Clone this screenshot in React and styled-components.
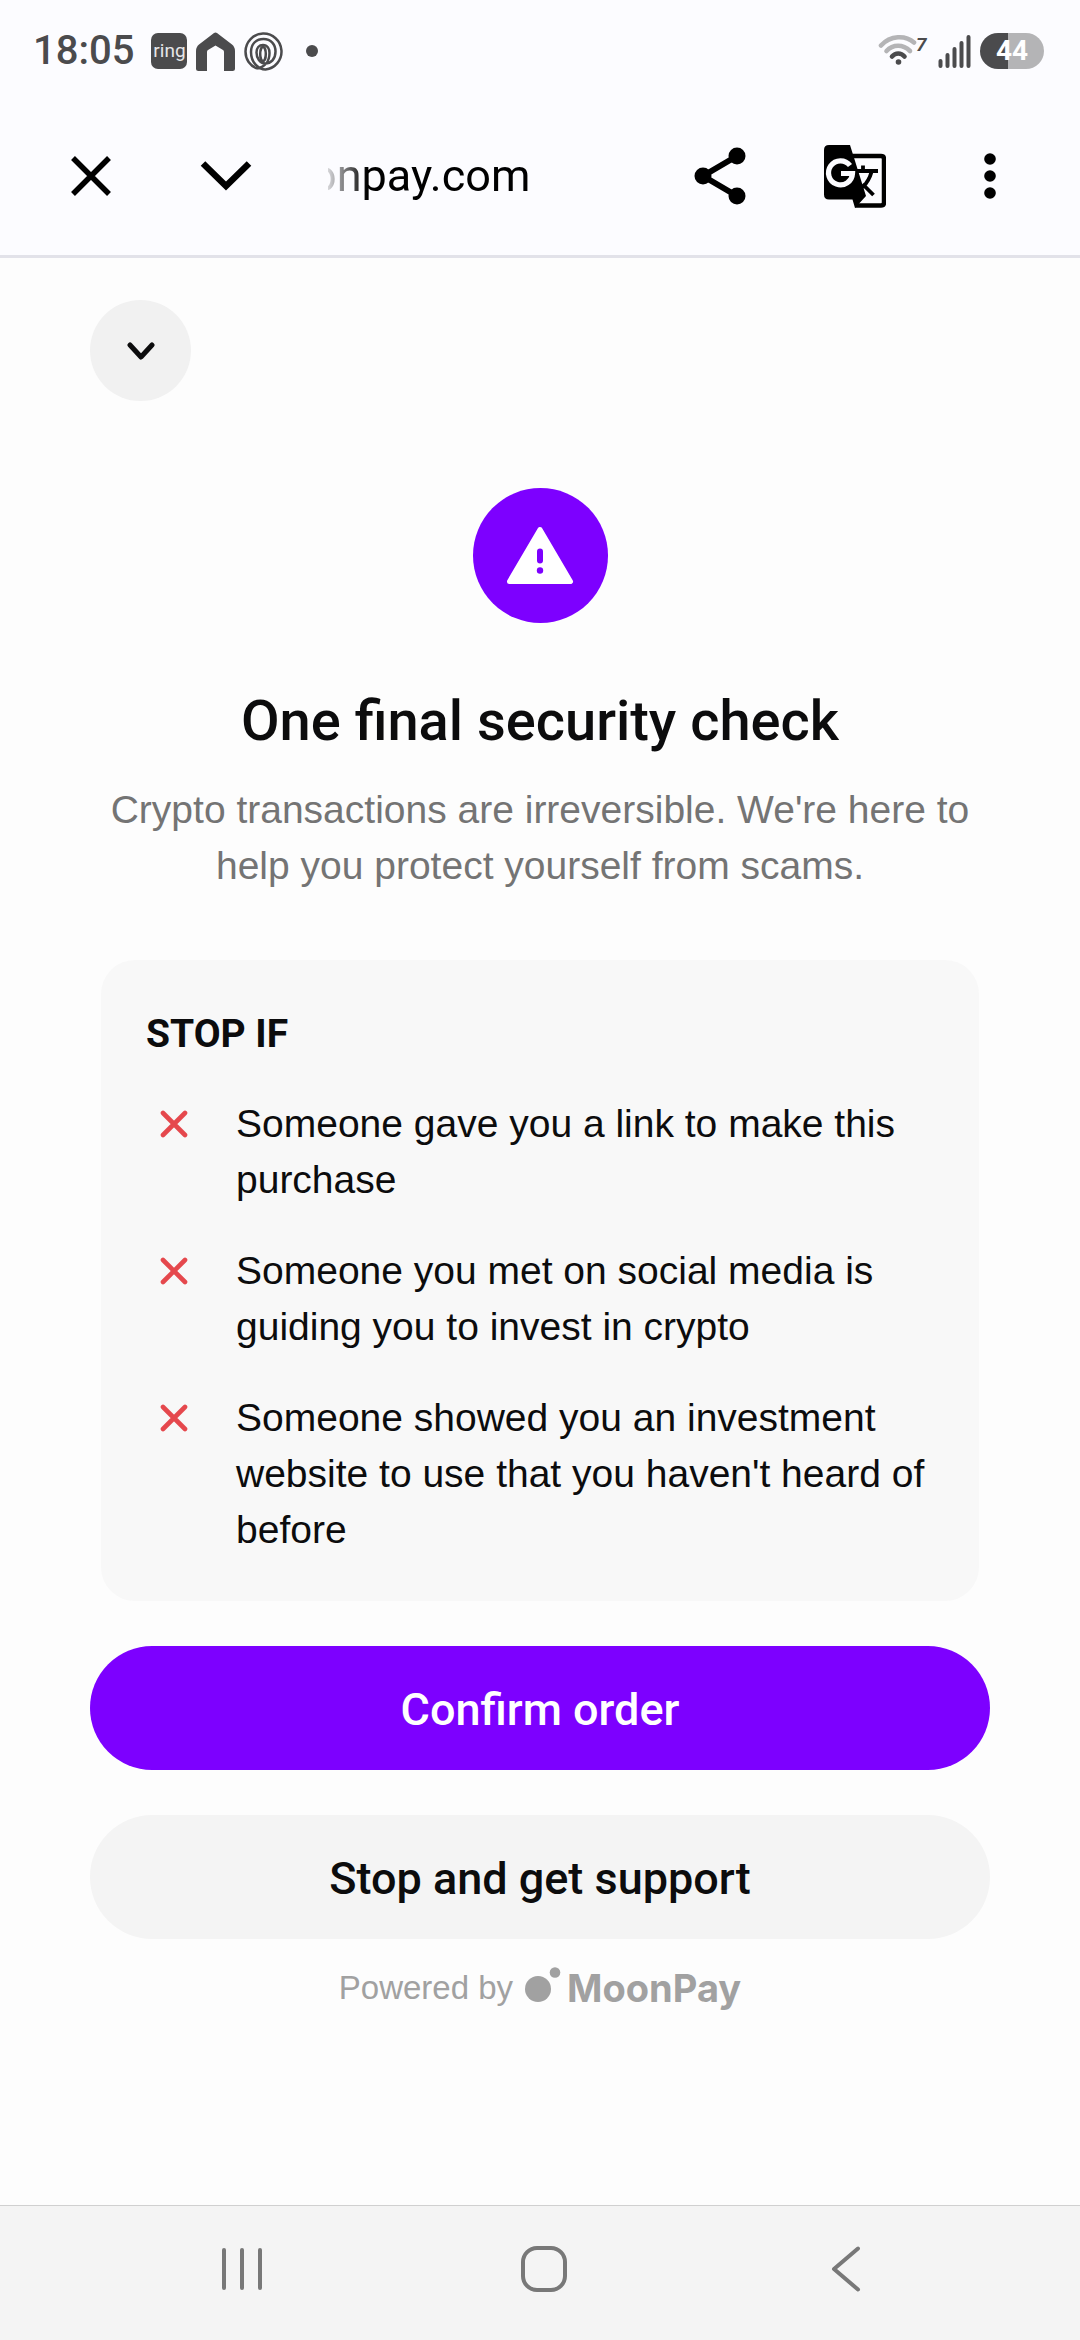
import React from "react";
import styled, { createGlobalStyle } from "styled-components";

const stopReasons = [
  "Someone gave you a link to make this purchase",
  "Someone you met on social media is guiding you to invest in crypto",
  "Someone showed you an investment website to use that you haven't heard of before",
];

const HouseIcon = () => (
  <svg width="39" height="39" viewBox="0 0 39 39" fill="#4b4b4d" aria-hidden="true">
    <path d="M18 1Q19.500 0 21 1L36 12.500Q39 15 39 19V36.500Q39 39 36.500 39H28V20Q28 18.500 27 18L19.500 13.500 12 18Q11 18.500 11 20V39H2.500Q0 39 0 36.500V19Q0 15 3 12.500Z" />
  </svg>
);

const SwirlIcon = () => (
  <svg
    width="39"
    height="39"
    viewBox="0 0 39 39"
    fill="none"
    stroke="#4b4b4d"
    strokeWidth="2.500"
    aria-hidden="true"
  >
    <path d="M13 36.500C6 34 1.500 27.500 1.500 19.500a18 18 0 1 1 20 18C15 37.500 7 31 7 20 7 12 12 7 19.500 7 27 7 31.500 12.500 31.500 19.500 31.500 27 27 31.500 21 31.500 16 31.500 12.500 26 12.500 20.500 12.500 16 15 13 19 13 23.500 13 25.500 17 25.500 21 25.500 29 21 35 13 36.500" />
    <ellipse cx="19" cy="22" rx="2.800" ry="7" />
  </svg>
);

const WifiIcon = () => (
  <svg width="51" height="34" viewBox="0 0 51 34" fill="none" aria-hidden="true">
    <g strokeWidth="4.600" strokeLinecap="round">
      <path d="M3 11.500C12.500 1 27.500 1 36 8.500" stroke="#b4b4b6" />
      <path d="M8.500 17C15 10 25 10 32 17" stroke="#b4b4b6" />
      <path d="M14 22.500C17.500 18.500 23 18.500 26.500 22.500" stroke="#4b4b4d" />
    </g>
    <circle cx="20.500" cy="28" r="2.800" fill="#4b4b4d" />
    <text
      x="38"
      y="17"
      fill="#4b4b4d"
      fontFamily="Roboto, sans-serif"
      fontSize="19"
      fontWeight="700"
      fontStyle="italic"
    >
      7
    </text>
  </svg>
);

const SignalIcon = () => (
  <svg
    width="33"
    height="34"
    viewBox="0 0 33 34"
    stroke="#4b4b4d"
    strokeWidth="4"
    strokeLinecap="round"
    aria-hidden="true"
  >
    <path d="M2.500 27V32M9.500 21V32M16.500 15V32M23.500 9V32M30.500 3V32" />
  </svg>
);

const CloseIcon = () => (
  <svg width="40" height="40" viewBox="0 0 40 40" fill="none" stroke="#000" strokeWidth="5.500">
    <path d="M2 2 38 38M38 2 2 38" />
  </svg>
);

const ExpandIcon = () => (
  <svg width="52" height="30" viewBox="0 0 52 30" fill="none" stroke="#000" strokeWidth="6.500">
    <path d="M3 2.500 26 25 49 2.500" />
  </svg>
);

const ShareIcon = () => (
  <svg width="52" height="58" viewBox="0 0 52 58">
    <path d="M43 9 9 29 43 49" fill="none" stroke="#000" strokeWidth="6" />
    <circle cx="43" cy="9" r="8.500" />
    <circle cx="9" cy="29" r="8.500" />
    <circle cx="43" cy="49" r="8.500" />
  </svg>
);

const TranslateIcon = () => (
  <svg width="62" height="63" viewBox="0 0 62 63">
    <path
      d="M28 11H57Q60 11 60 14V57.500Q60 60.500 57 60.500H31"
      fill="none"
      stroke="#000"
      strokeWidth="4.500"
    />
    <path d="M5 0H26L42 51 31 63 28.500 54.500H5Q0 54.500 0 49.500V5Q0 0 5 0Z" />
    <path
      d="M26 20.500A12 12 0 1 0 28.500 28.500H17"
      fill="none"
      stroke="#fcfcff"
      strokeWidth="5.200"
    />
    <path d="M35.500 28H45.500L39.500 39Z" fill="#fcfcff" />
    <path
      d="M32 26H54M39 20.500V26M47.500 27Q45 36 38.500 42.500M38.500 39 49.500 50"
      fill="none"
      stroke="#000"
      strokeWidth="3.800"
    />
  </svg>
);

const MoreIcon = () => (
  <svg width="12" height="46" viewBox="0 0 12 46">
    <circle cx="6" cy="6" r="5.800" />
    <circle cx="6" cy="23" r="5.800" />
    <circle cx="6" cy="40" r="5.800" />
  </svg>
);

const ChevronIcon = () => (
  <svg
    width="28"
    height="18"
    viewBox="0 0 28 18"
    fill="none"
    stroke="#0c0c0d"
    strokeWidth="5"
    strokeLinecap="round"
    strokeLinejoin="round"
  >
    <path d="M3 3 14 15 25 3" />
  </svg>
);

const WarningIcon = () => (
  <svg width="68" height="60" viewBox="0 0 68 60" aria-hidden="true">
    <path
      d="M34 3.500 64.500 55.500H3.500Z"
      fill="#fff"
      stroke="#fff"
      strokeWidth="5"
      strokeLinejoin="round"
    />
    <path d="M34 25.500V34.500" stroke="#7d00ff" strokeWidth="6" strokeLinecap="round" />
    <circle cx="34" cy="44.500" r="3.200" fill="#7d00ff" />
  </svg>
);

const CrossIcon = () => (
  <svg
    width="28"
    height="28"
    viewBox="0 0 28 28"
    stroke="#e5484d"
    strokeWidth="4.600"
    strokeLinecap="round"
    aria-hidden="true"
  >
    <path d="M3 3 25 25M25 3 3 25" />
  </svg>
);

const MoonIcon = () => (
  <svg width="36" height="42" viewBox="0 0 36 42" fill="#a1a1a1" aria-hidden="true">
    <circle cx="13" cy="22" r="13" />
    <circle cx="30" cy="5.500" r="5.300" />
  </svg>
);

const RecentsIcon = () => (
  <svg width="42" height="44" viewBox="0 0 42 44" stroke="#787878" strokeWidth="4" strokeLinecap="round">
    <path d="M3 3V41M21 3V41M39 3V41" />
  </svg>
);

const HomeIcon = () => (
  <svg width="46" height="46" viewBox="0 0 46 46" fill="none" stroke="#787878" strokeWidth="4">
    <rect x="2" y="2" width="42" height="42" rx="14" />
  </svg>
);

const BackIcon = () => (
  <svg
    width="30"
    height="46"
    viewBox="0 0 30 46"
    fill="none"
    stroke="#787878"
    strokeWidth="4"
    strokeLinecap="round"
    strokeLinejoin="round"
  >
    <path d="M27 2.500 3 23 27 43.500" />
  </svg>
);

const App = () => {
  return (
    <Screen>
      <GlobalStyle />
      <StatusBar>
        <StatusGroup>
          <Clock>18:05</Clock>
          <RingBadge>ring</RingBadge>
          <HouseIcon />
          <SwirlIcon />
          <Dot />
        </StatusGroup>
        <StatusGroup>
          <WifiIcon />
          <SignalIcon />
          <Battery>44</Battery>
        </StatusGroup>
      </StatusBar>

      <Toolbar>
        <ToolButton aria-label="Close">
          <CloseIcon />
        </ToolButton>
        <ToolButton aria-label="Minimise">
          <ExpandIcon />
        </ToolButton>
        <Address>
          <span>onpay.com</span>
        </Address>
        <ToolButton aria-label="Share">
          <ShareIcon />
        </ToolButton>
        <ToolButton aria-label="Translate">
          <TranslateIcon />
        </ToolButton>
        <ToolButton aria-label="More options">
          <MoreIcon />
        </ToolButton>
      </Toolbar>

      <Main>
        <RoundButton aria-label="Collapse">
          <ChevronIcon />
        </RoundButton>

        <Intro>
          <WarningBadge>
            <WarningIcon />
          </WarningBadge>
          <Title>One final security check</Title>
          <Subtitle>
            Crypto transactions are irreversible. We're here to help you protect
            yourself from scams.
          </Subtitle>
        </Intro>

        <Card>
          <CardTitle>STOP IF</CardTitle>
          <ReasonList>
            {stopReasons.map((reason) => (
              <Reason key={reason}>
                <ReasonIcon>
                  <CrossIcon />
                </ReasonIcon>
                <span>{reason}</span>
              </Reason>
            ))}
          </ReasonList>
        </Card>

        <Actions>
          <ActionButton $primary>Confirm order</ActionButton>
          <ActionButton>Stop and get support</ActionButton>
        </Actions>

        <Powered>
          Powered by
          <Brand>
            <MoonIcon />
            MoonPay
          </Brand>
        </Powered>
      </Main>

      <NavBar>
        <NavButton aria-label="Recent apps">
          <RecentsIcon />
        </NavButton>
        <NavButton aria-label="Home">
          <HomeIcon />
        </NavButton>
        <NavButton aria-label="Back">
          <BackIcon />
        </NavButton>
      </NavBar>
    </Screen>
  );
};

const GlobalStyle = createGlobalStyle`
  * {
    box-sizing: border-box;
  }

  body {
    margin: 0;
    background: #fdfdfd;
    color: #0c0c0d;
    font-family: "Liberation Sans", Arial, sans-serif;
  }

  button {
    border: 0;
    padding: 0;
    background: none;
    color: inherit;
    font: inherit;
    cursor: pointer;
  }

  svg {
    display: block;
    flex-shrink: 0;
  }
`;

const Screen = styled.div`
  display: flex;
  flex-direction: column;
  min-height: 100vh;
`;

const StatusBar = styled.div`
  display: flex;
  justify-content: space-between;
  align-items: center;
  padding: 31px 36px 26px 33px;
  background: #fcfcff;
  color: #4b4b4d;
  font-family: Roboto, sans-serif;
  line-height: 40px;
`;

const StatusGroup = styled.div`
  display: flex;
  align-items: center;
  gap: 9px;
`;

const Clock = styled.span`
  margin-right: 8px;
  font-size: 40px;
  font-weight: 500;
`;

const RingBadge = styled.span`
  width: 36px;
  height: 36px;
  border-radius: 7px;
  background: #4b4b4d;
  color: #e6e6e8;
  font-size: 19px;
  line-height: 35px;
  text-align: center;
`;

const Dot = styled.span`
  width: 12px;
  height: 12px;
  margin-left: 14px;
  border-radius: 50%;
  background: #4b4b4d;
`;

const Battery = styled.span`
  width: 64px;
  height: 36px;
  border-radius: 18px;
  background: linear-gradient(to right, #4b4b4d 43%, #b4b4b6 43%);
  color: #fff;
  font-size: 28px;
  font-weight: 700;
  line-height: 36px;
  text-align: center;
`;

const Toolbar = styled.header`
  display: flex;
  align-items: stretch;
  height: 161px;
  padding: 0 23px;
  border-bottom: 3px solid #e2e2e9;
  background: #fcfcff;
`;

const ToolButton = styled.button`
  display: flex;
  justify-content: center;
  align-items: center;
  width: 135px;
`;

const Address = styled.div`
  display: flex;
  flex: 1;
  align-items: center;
  padding-left: 18px;
  font-family: Roboto, sans-serif;
  font-size: 45px;
  line-height: 56px;
  color: #000;

  span {
    mask-image: linear-gradient(
      to right,
      transparent 17px,
      rgba(0, 0, 0, 0.15) 17px,
      #000 56px
    );
  }
`;

const Main = styled.main`
  flex: 1;
  padding: 42px 90px;
`;

const RoundButton = styled.button`
  display: flex;
  justify-content: center;
  align-items: center;
  width: 101px;
  height: 101px;
  border-radius: 50%;
  background: #f1f1f1;
`;

const Intro = styled.section`
  display: flex;
  flex-direction: column;
  align-items: center;
  margin-top: 87px;
  text-align: center;
`;

const WarningBadge = styled.div`
  display: flex;
  justify-content: center;
  align-items: center;
  width: 135px;
  height: 135px;
  border-radius: 50%;
  background: #7d00ff;
`;

const Title = styled.h1`
  margin: 64px 0 27px;
  font-family: Roboto, sans-serif;
  font-size: 56px;
  font-weight: 500;
  line-height: 68px;
`;

const Subtitle = styled.p`
  margin: 0;
  color: #747474;
  font-size: 39px;
  line-height: 56px;
`;

const Card = styled.section`
  margin: 66px 11px 0;
  padding: 46px 45px 43px;
  border-radius: 34px;
  background: #f8f8f8;
  font-size: 39px;
  line-height: 56px;
`;

const CardTitle = styled.h2`
  margin: 0 0 34px;
  font-family: Roboto, sans-serif;
  font-size: 39px;
  font-weight: 700;
`;

const ReasonList = styled.ul`
  display: flex;
  flex-direction: column;
  gap: 35px;
  margin: 0;
  padding: 0;
  list-style: none;
`;

const Reason = styled.li`
  display: flex;
  gap: 34px;
`;

const ReasonIcon = styled.span`
  display: flex;
  flex: none;
  justify-content: center;
  align-items: center;
  width: 56px;
  height: 56px;
`;

const Actions = styled.div`
  display: flex;
  flex-direction: column;
  gap: 45px;
  margin-top: 45px;
`;

const ActionButton = styled.button`
  height: 124px;
  padding-top: 3px;
  border-radius: 62px;
  background: ${(props) => (props.$primary ? "#7d00ff" : "#f4f4f4")};
  color: ${(props) => (props.$primary ? "#fff" : "#0c0c0d")};
  font-family: Roboto, sans-serif;
  font-size: 45px;
  font-weight: 500;
  line-height: 56px;
`;

const Powered = styled.footer`
  display: flex;
  justify-content: center;
  align-items: center;
  gap: 12px;
  margin-top: 27px;
  color: #a1a1a1;
  font-size: 33px;
  line-height: 44px;
`;

const Brand = styled.span`
  display: flex;
  align-items: center;
  gap: 6px;
  font-family: Inter, sans-serif;
  font-size: 38px;
  font-weight: 700;
`;

const NavBar = styled.nav`
  display: flex;
  height: 135px;
  padding: 0 83px 0 91px;
  border-top: 1px solid #d0d0d0;
  background: #f4f4f4;
`;

const NavButton = styled.button`
  display: flex;
  flex: 1;
  justify-content: center;
  align-items: center;
  padding-bottom: 8px;
`;

export default App;
